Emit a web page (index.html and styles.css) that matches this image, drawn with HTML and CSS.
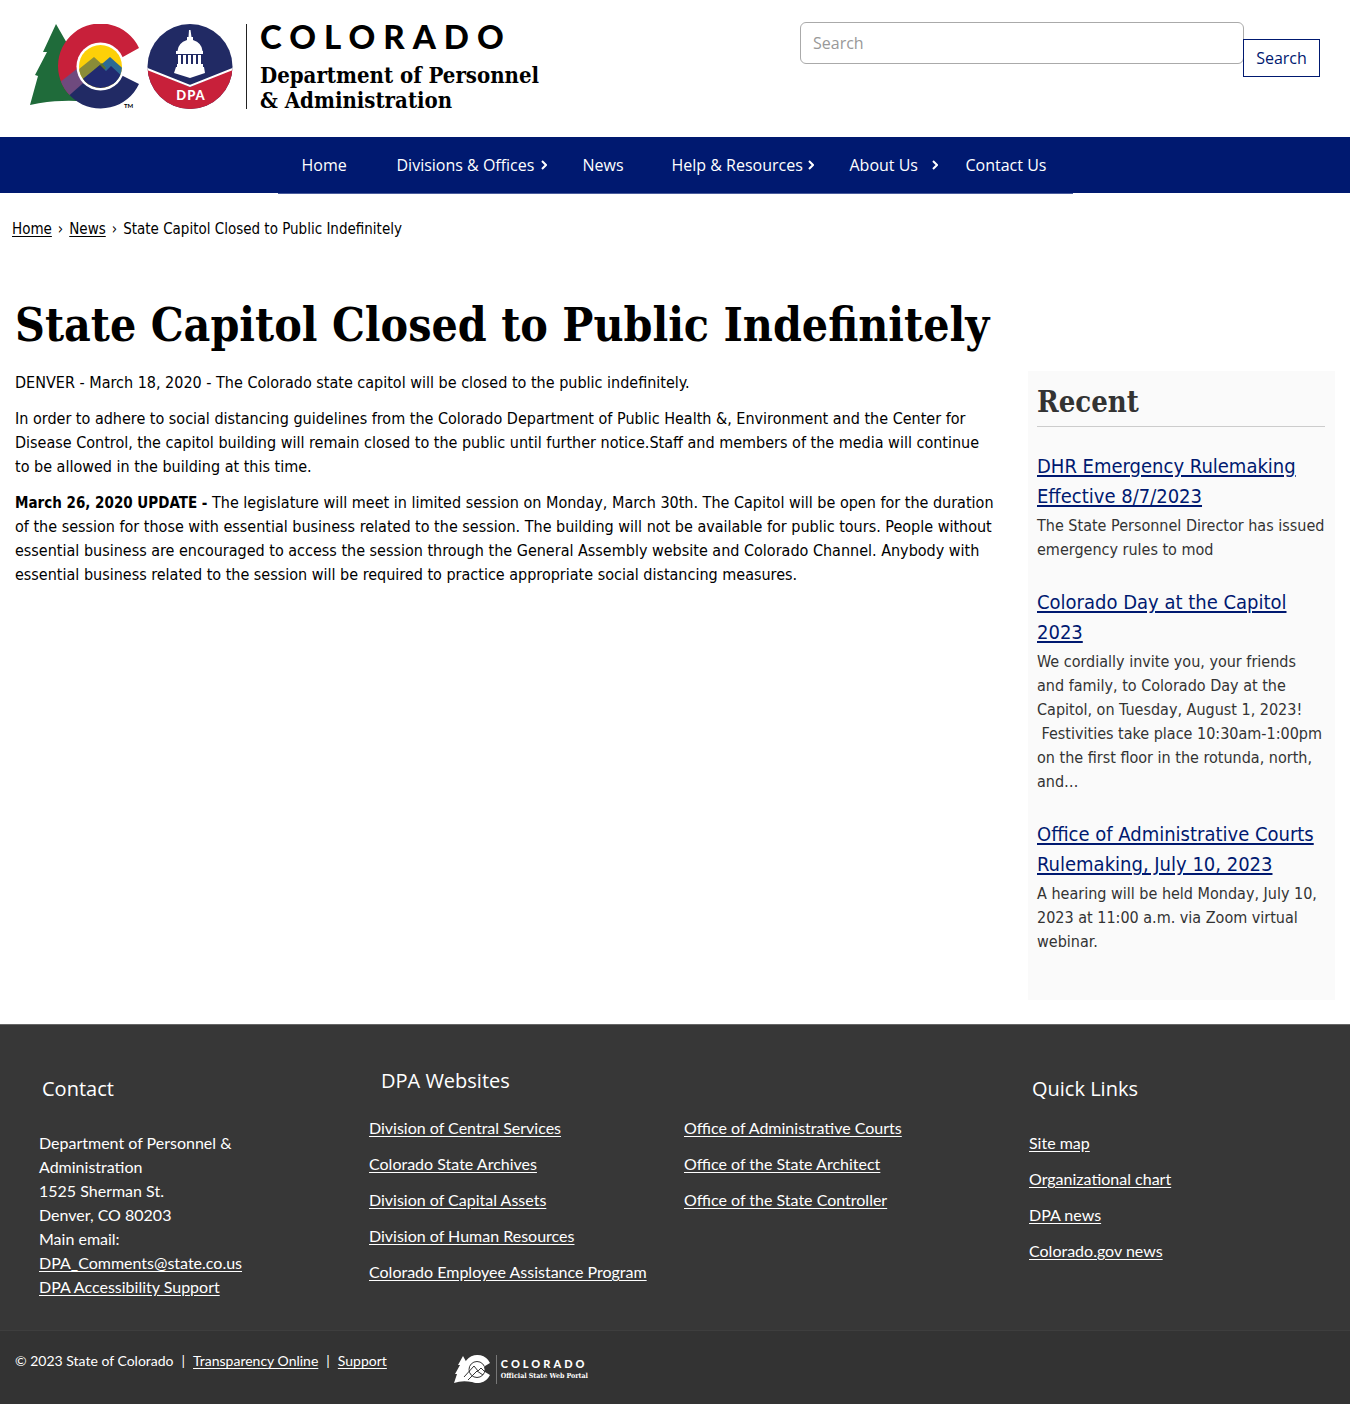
FILE: index.html
```html
<!DOCTYPE html>
<html lang="en">
<head>
<meta charset="utf-8">
<meta name="viewport" content="width=device-width, initial-scale=1">
<title>State Capitol Closed to Public Indefinitely</title>
<link rel="stylesheet" href="styles.css">
</head>
<body>
<header class="header">
  <a class="brand" href="#">
    <svg class="brand-marks" width="203" height="85" viewBox="0 0 203 85" aria-hidden="true">
      <defs>
        <clipPath id="letter-c"><path d="M109 24A42.500 42.500 0 1 0 109 60L91 51H70V34H91Z"/></clipPath>
        <clipPath id="inner"><circle cx="70.500" cy="42.500" r="21.500"/></clipPath>
        <clipPath id="seal"><circle cx="160" cy="42.500" r="42.500"/></clipPath>
      </defs>
      <path fill="#1f6b3a" d="M26 0L42 28L54 78Q42 76 32 77Q18 77 0 81L8 52L5 51L17 28L13 28Z"/>
      <g clip-path="url(#letter-c)">
        <path fill="#c8203a" d="M20 0H112V46H64L30 80H20Z"/>
        <path fill="#6f4a7e" d="M20 66L53 40L62 52L40 72L20 90Z"/>
        <path fill="#212a64" d="M34 76L68 46H112V86H34Z"/>
      </g>
      <circle cx="70.500" cy="42.500" r="24" fill="#fff"/>
      <g clip-path="url(#inner)">
        <path fill="#fdd008" d="M48 20H94V66H48Z"/>
        <path fill="#8a8c38" d="M44 49L64 33L75 43L56 66H44Z"/>
        <path fill="#2c6a94" d="M66 45L80 33L98 49V60H66Z"/>
        <path fill="#56702f" d="M64 46L72 39L76 44L70 50Z"/>
        <path fill="#212a70" d="M44 62L70 41L76 47L81 42L98 58V70H44Z"/>
      </g>
      <text class="mark-tm" x="94" y="84">TM</text>
      <g clip-path="url(#seal)">
        <path fill="#212a64" d="M117 0H203V86H117Z"/>
        <path fill="#c8203a" d="M117 45L160 63L203 45V86H117Z"/>
        <path fill="none" stroke="#fff" stroke-width="2" d="M116 44.500L160 62L204 44.500"/>
      </g>
      <g fill="#fff">
        <path d="M159 6h1.500l1 7h1.500v3q9 3 9.500 11h-25q0.500-8 9.500-11v-3h1.500z"/>
        <path d="M146 27h27v3h-27zM148 31h3v9h-3zM153 31h3v9h-3zM158 31h3v9h-3zM163 31h3v9h-3zM168 31h3v9h-3zM147 40h26v3h-26zM146 43h28l1 6l-15 5l-16-5z"/>
      </g>
      <text class="mark-dpa" x="161" y="76" text-anchor="middle">DPA</text>
    </svg>
    <span class="brand-text">
      <span class="brand-state">COLORADO</span>
      <span class="brand-dept">Department of Personnel<br>&amp; Administration</span>
    </span>
  </a>
  <form class="search" role="search">
    <input class="search-input" type="search" placeholder="Search" aria-label="Search">
    <button class="search-button" type="submit">Search</button>
  </form>
</header>

<nav class="nav" aria-label="Main">
  <ul class="menu">
    <li><a href="#">Home</a></li>
    <li><a href="#">Divisions &amp; Offices<svg class="chevron" viewBox="0 0 6 10"><path d="M1 1l4 4-4 4"/></svg></a></li>
    <li><a href="#">News</a></li>
    <li><a href="#">Help &amp; Resources<svg class="chevron" viewBox="0 0 6 10"><path d="M1 1l4 4-4 4"/></svg></a></li>
    <li><a href="#">About Us<svg class="chevron" viewBox="0 0 6 10"><path d="M1 1l4 4-4 4"/></svg></a></li>
    <li><a href="#">Contact Us</a></li>
  </ul>
</nav>

<nav class="breadcrumb" aria-label="Breadcrumb">
  <a href="#">Home</a><span>›</span><a href="#">News</a><span>›</span>State Capitol Closed to Public Indefinitely
</nav>

<main class="main">
  <h1>State Capitol Closed to Public Indefinitely</h1>
  <div class="columns">
    <article class="article">
      <p>DENVER - March 18, 2020 - The Colorado state capitol will be closed to the public indefinitely.</p>
      <p>In order to adhere to social distancing guidelines from the Colorado Department of Public Health &amp;, Environment and the Center for Disease Control, the capitol building will remain closed to the public until further notice.Staff and members of the media will continue to be allowed in the building at this time.</p>
      <p><strong>March 26, 2020 UPDATE -</strong> The legislature will meet in limited session on Monday, March 30th. The Capitol will be open for the duration of the session for those with essential business related to the session. The building will not be available for public tours. People without essential business are encouraged to access the session through the General Assembly website and Colorado Channel. Anybody with essential business related to the session will be required to practice appropriate social distancing measures.</p>
    </article>
    <aside class="recent">
      <h2>Recent</h2>
      <section class="post">
        <h3><a href="#">DHR Emergency Rulemaking Effective 8/7/2023</a></h3>
        <p>The State Personnel Director has issued emergency rules to mod</p>
      </section>
      <section class="post">
        <h3><a href="#">Colorado Day at the Capitol 2023</a></h3>
        <p>We cordially invite you, your friends and family, to Colorado Day at the Capitol, on Tuesday, August 1, 2023! &nbsp;Festivities take place 10:30am-1:00pm on the first floor in the rotunda, north, and…</p>
      </section>
      <section class="post">
        <h3><a href="#">Office of Administrative Courts Rulemaking, July 10, 2023</a></h3>
        <p>A hearing will be held Monday, July 10, 2023 at 11:00 a.m. via Zoom virtual webinar.</p>
      </section>
    </aside>
  </div>
</main>

<footer class="footer">
  <div class="footer-columns">
    <section class="footer-side">
      <h2>Contact</h2>
      <address>Department of Personnel &amp;<br>Administration<br>1525 Sherman St.<br>Denver, CO 80203<br>Main email:<br><a href="#">DPA_Comments@state.co.us</a><br><a href="#">DPA Accessibility Support</a></address>
    </section>
    <section class="footer-sites">
      <h2>DPA Websites</h2>
      <div class="site-lists">
        <ul class="links">
          <li><a href="#">Division of Central Services</a></li>
          <li><a href="#">Colorado State Archives</a></li>
          <li><a href="#">Division of Capital Assets</a></li>
          <li><a href="#">Division of Human Resources</a></li>
          <li><a href="#">Colorado Employee Assistance Program</a></li>
        </ul>
        <ul class="links">
          <li><a href="#">Office of Administrative Courts</a></li>
          <li><a href="#">Office of the State Architect</a></li>
          <li><a href="#">Office of the State Controller</a></li>
        </ul>
      </div>
    </section>
    <section class="footer-side">
      <h2>Quick Links</h2>
      <ul class="links">
        <li><a href="#">Site map</a></li>
        <li><a href="#">Organizational chart</a></li>
        <li><a href="#">DPA news</a></li>
        <li><a href="#">Colorado.gov news</a></li>
      </ul>
    </section>
  </div>
  <div class="footer-bottom">
    <p class="legal">© 2023 State of Colorado<span>|</span><a href="#">Transparency Online</a><span>|</span><a href="#">Support</a></p>
    <a class="portal" href="#">
      <svg width="37" height="29" viewBox="0 0 37 29" aria-hidden="true">
        <path fill="#fff" d="M9 1L14 10L18 27Q8 25 0 28L3 19L1 19L6 10L4 10Z"/>
        <path fill="#fff" d="M36 8A14 14 0 1 0 36 20L31 17V11Z"/>
        <circle cx="23" cy="14.500" r="8" fill="#fff" stroke="#333" stroke-width="1"/>
        <path fill="none" stroke="#333" d="M10 22L20 11L24 16L27 13L31 17M14 25L23 16L29 20"/>
      </svg>
      <span class="portal-text"><span class="portal-state">COLORADO</span><span class="portal-name">Official State Web Portal</span></span>
    </a>
  </div>
</footer>
</body>
</html>
```
FILE: styles.css
```css
* { box-sizing: border-box; }

body {
  margin: 0;
  background: #fff;
  color: #000;
  font: 16px/24px "DejaVu Sans Condensed", "DejaVu Sans", sans-serif;
}

h1, h2, h3, p, ul { margin: 0; padding: 0; }
ul { list-style: none; }
a { color: inherit; text-underline-offset: 2px; }

/* Header */
.header {
  display: flex;
  justify-content: space-between;
  align-items: flex-start;
  padding: 22px 30px 28px;
}
.brand {
  display: flex;
  gap: 13px;
  padding-top: 2px;
  color: #000;
  text-decoration: none;
}
.brand-marks { display: block; }
.mark-tm { font: 700 6px Lato, sans-serif; }
.mark-dpa { font: 900 13px Lato, sans-serif; fill: #fff; letter-spacing: 1px; }
.brand-text {
  display: flex;
  flex-direction: column;
  height: 85px;
  padding-left: 13px;
  border-left: 1px solid #222;
}
.brand-state {
  font: 900 33px/24px Lato, sans-serif;
  letter-spacing: 8px;
  margin-bottom: 15px;
}
.brand-dept { font: 700 22px/25px "DejaVu Serif Condensed", "DejaVu Serif", serif; white-space: nowrap; }

.search { display: flex; align-items: flex-start; width: 520px; }
.search-input {
  flex: 1;
  min-width: 0;
  height: 42px;
  padding: 0 12px;
  border: 1px solid #aaa;
  border-radius: 6px;
  background: #fff;
  font: 16px "Open Sans", sans-serif;
  appearance: none;
}
.search-input::placeholder { color: #999; opacity: 1; }
.search-button {
  width: 77px;
  height: 38px;
  margin: 17px 0 0 -1px;
  padding: 0;
  border: 1px solid #001970;
  background: #fff;
  color: #001970;
  font: 500 16px "Open Sans", sans-serif;
}

/* Main menu */
.nav { height: 56px; background: #001970; }
.menu {
  display: grid;
  grid-template-columns: 95px 186px 89px 178px 116px 131px;
  width: max-content;
  margin: 0 auto;
  border-bottom: 1px solid #4a5c9c;
}
.menu a {
  display: flex;
  align-items: center;
  justify-content: space-between;
  height: 56px;
  padding: 0 12px 0 24px;
  color: #fff;
  font: 16px "Open Sans", sans-serif;
  white-space: nowrap;
  text-decoration: none;
}
.chevron { width: 6px; height: 10px; fill: none; stroke: #fff; stroke-width: 2; }
.menu li:nth-child(5) a { padding-right: 4px; }

.breadcrumb { padding: 24px 12px; font: 15px/24px "DejaVu Sans Condensed", "DejaVu Sans", sans-serif; }
.breadcrumb span { margin: 0 6px; }

/* Page content */
.main { padding: 32px 15px 24px; }
h1 {
  margin-bottom: 18px;
  font: 700 46px/56px "DejaVu Serif Condensed", "DejaVu Serif", serif;
}
.columns { display: grid; grid-template-columns: minmax(0, 1fr) 307px; gap: 30px; }
.article p { margin-bottom: 12px; }
.article strong { font-size: 15px; line-height: 1; }

.recent { padding: 9px 10px 21px 9px; background: #fafafa; color: #333; }
.recent h2 {
  margin-bottom: 24px;
  padding-bottom: 2px;
  border-bottom: 1px solid #ccc;
  font: 700 29px/44px "DejaVu Serif Condensed", "DejaVu Serif", serif;
}
.recent h3 { margin-bottom: 3px; color: #001970; font-size: 20px; font-weight: 400; line-height: 30px; }
.post { margin-bottom: 25px; }

/* Footer */
.footer { background: #373737; color: #fff; font-family: Lato, sans-serif; }
.footer-columns {
  display: grid;
  grid-template-columns: 1fr 2fr 1fr;
  padding: 0 15px;
  border-top: 1px solid #666;
}
.footer h2 { font: 20px/30px "Open Sans", sans-serif; }
.footer-side { padding: 49px 24px 31px; }
.footer-side h2 { margin: 0 3px 27px; }
.footer-sites { padding: 41px 24px 31px; }
.footer-sites h2 { margin: 0 12px 20px; }
.footer address { font-style: normal; }
.site-lists { display: grid; grid-template-columns: 1fr 1fr; gap: 18px; }
.links li { margin-bottom: 12px; white-space: nowrap; }
.footer-bottom {
  display: flex;
  align-items: flex-start;
  gap: 67px;
  padding: 18px 15px 20px;
  border-top: 1px solid #3e3e3e;
  background: #333;
}
.legal { font-size: 14px; }
.legal span { margin: 0 8px; }
.portal { display: flex; gap: 5px; margin-top: 6px; color: #fff; text-decoration: none; }
.portal-text { display: flex; flex-direction: column; padding: 3px 0 0 4px; border-left: 1px solid #777; }
.portal-state { font: 900 11px/11px Lato, sans-serif; letter-spacing: 3px; }
.portal-name { font: 700 7px/14px "DejaVu Serif Condensed", "DejaVu Serif", serif; }
```
